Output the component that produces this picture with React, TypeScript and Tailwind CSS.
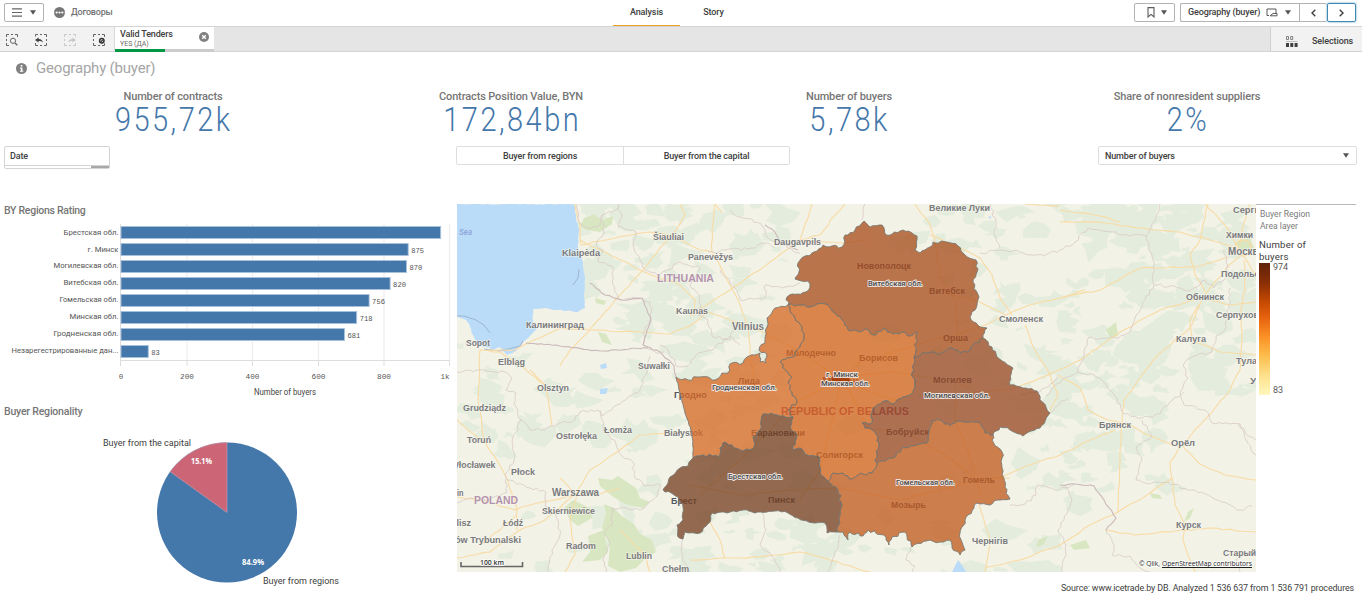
import React from "react";

type Pt = [number, number];

/* ---------- geometry helpers ---------- */

function hash(a: number, b: number) {
  const s = Math.sin(a * 12.9898 + b * 78.233) * 43758.5453;
  return s - Math.floor(s);
}

function pts(s: string): Pt[] {
  return s.trim().split(/\s+/).map((p) => p.split(",").map(Number) as Pt);
}

/** Adds small irregularities between the given vertices of a border. */
function rough(line: Pt[], amp = 1.5, step = 3): Pt[] {
  const out: Pt[] = [line[0]];
  for (let i = 1; i < line.length; i++) {
    const [x0, y0] = line[i - 1];
    const [x1, y1] = line[i];
    const d = Math.hypot(x1 - x0, y1 - y0) || 1;
    const n = Math.max(1, Math.round(d / step));
    for (let k = 1; k < n; k++) {
      const t = k / n;
      const x = x0 + (x1 - x0) * t;
      const y = y0 + (y1 - y0) * t;
      const j = (hash(x, y) - 0.5) * 2 * amp;
      out.push([x - ((y1 - y0) / d) * j, y + ((x1 - x0) / d) * j]);
    }
    out.push([x1, y1]);
  }
  return out;
}

const toPath = (p: Pt[]) => "M" + p.map(([x, y]) => x.toFixed(1) + "," + y.toFixed(1)).join("L");
const rev = (p: Pt[]) => [...p].reverse();
const ring = (...parts: Pt[][]) => toPath(parts.flat()) + "Z";

/* ---------- oblast borders ---------- */

const vitOuter = rough(pts("788,305 787,297 792,294 806,292 810,284 808,281 795,279 799,272 798,263 803,257 812,253 823,245 842,247 845,235 855,230 864,221 870,227 882,225 886,235 903,230 917,236 915,250 920,253 930,247 933,242 947,242 958,246 965,255 976,260 977,272 973,282 979,297 977,305 970,317 980,327 987,328 983,338"));
const vitMog = rough(pts("983,338 973,345 967,352 960,353 952,348 940,354 932,352 923,352 914,357"));
const vitMin = rough(pts("914,357 917,332 910,336 902,332 893,334 883,329 873,335 865,329 860,332 848,330 842,320 835,313 828,305 817,304 807,307 798,305 788,305"));
const groMin = rough(pts("788,305 795,318 802,327 804,337 800,347 793,357 780,362 785,370 792,377 788,383 792,392 797,402 788,410 793,417"));
const groBre = rough(pts("793,417 777,415 763,414 760,430 753,437 755,445 750,450 740,450 732,445 725,442 720,448 719,457 703,455 693,458"));
const groOuter = rough(pts("693,458 693,447 692,433 685,413 680,393 676,377"), 0.4).concat(
  rough(pts("676,377 688,380 697,377 708,377 715,380 722,373 728,373 730,364 743,363 747,357 760,353 760,362 766,363 767,355 759,350 765,340 767,327 767,318 775,308 788,305"))
);
const breMin = rough(pts("793,417 790,427 797,435 793,450 802,449 807,455 818,456 820,473 828,481"));
const breGom = rough(pts("828,481 838,490 842,505 839,520 838,532"));
const breOuter = rough(pts("838,532 827,533 825,523 815,523 798,518 788,513 775,511 755,513 743,510 727,513 712,513 710,522 700,533 685,532 683,539 678,537 677,525 683,520 683,507 678,497 663,490 670,477 680,468 688,466 693,458"), 1.1);
const mogMin = rough(pts("914,357 912,373 915,387 910,395 903,397 893,404 885,401 873,408 872,423 862,423 865,428 875,432 879,443 875,460 877,463"));
const mogGom = rough(pts("877,463 893,458 903,447 917,445 927,443 929,432 932,420 940,420 950,426 960,421 979,422 985,433 993,435"));
const mogOuter = rough(pts("993,435 1000,427 1010,430 1023,436 1040,428 1050,413 1040,400 1037,391 1023,388 1010,385 1013,368 997,357 992,347 983,338"));
const gomMin = rough(pts("877,463 872,473 858,475 852,479 843,473 833,473 828,481"));
const gomOuter = rough(pts("993,435 992,440 1002,452 1002,468 1005,487 1010,499 997,500 990,505 977,503 965,520 960,533 965,550 960,555 952,548 950,540 940,542 930,540 912,547 905,532 892,537 889,545 886,537 868,530 863,536 850,532 848,540 843,532 838,532"));

const oblasts = [
  { name: "Витебская обл.", fill: "#a74c1c", d: ring(vitOuter, vitMog, vitMin) },
  { name: "Гродненская обл.", fill: "#d66823", d: ring(groMin, groBre, groOuter) },
  { name: "Минская обл.", fill: "#d2621b", d: ring(rev(vitMin), mogMin, gomMin, rev(breMin), rev(groMin)) },
  { name: "Могилевская обл.", fill: "#974823", d: ring(vitMog, mogMin, mogGom, mogOuter) },
  { name: "Брестская обл.", fill: "#753e20", d: ring(breMin, breGom, breOuter, rev(groBre)) },
  { name: "Гомельская обл.", fill: "#c15a1d", d: ring(rev(mogGom), gomMin, breGom, rev(gomOuter)) },
];

/* ---------- base map ---------- */

/** Forest clusters: centre x, y, horizontal and vertical spread, number of patches. */
const forestAreas = [
  [640, 235, 60, 35, 34], [690, 330, 60, 60, 34], [730, 230, 60, 30, 20], [560, 400, 90, 40, 26],
  [680, 470, 60, 60, 20], [760, 545, 90, 30, 24], [1050, 250, 70, 50, 22], [1140, 340, 80, 50, 46],
  [1100, 400, 60, 50, 38], [1190, 250, 60, 50, 46], [1120, 470, 60, 40, 18], [1000, 560, 60, 30, 14],
  [940, 225, 50, 25, 10], [640, 300, 60, 40, 18], [500, 400, 45, 60, 14], [1230, 330, 30, 60, 16],
  [600, 550, 100, 35, 16], [840, 560, 70, 18, 12], [1030, 360, 40, 50, 12], [1050, 450, 40, 40, 12],
  [870, 400, 170, 130, 50], [1110, 225, 40, 20, 22], [730, 380, 50, 30, 16],
];

function patch(cx: number, cy: number, r: number, seed: number) {
  const n = 6 + Math.floor(hash(seed, 3) * 5);
  const p: Pt[] = [];
  for (let i = 0; i < n; i++) {
    const a = (i / n) * Math.PI * 2;
    const q = r * (0.25 + hash(seed, i + 7) * 1.15);
    p.push([cx + Math.cos(a) * q * 1.35, cy + Math.sin(a) * q * 0.85]);
  }
  return toPath(p) + "Z";
}

const forests = forestAreas.flatMap(([cx, cy, sx, sy, n], g) =>
  Array.from({ length: n }, (_, i) => {
    const s = g * 100 + i;
    return patch(cx + (hash(s, 1) - 0.5) * 2 * sx, cy + (hash(s, 2) - 0.5) * 2 * sy, 3 + hash(s, 9) * 11, s);
  })
);

const parks = [
  "M598,478L612,480L618,476L636,488L640,498L650,502L643,508L625,504L612,496L600,486Z",
  "M573,500L590,508L592,518L578,526L570,520L564,508Z",
  "M604,504L614,508L622,516L634,524L640,534L652,540L656,552L644,560L636,568L620,572L608,566L610,545L602,528L606,514Z",
  "M588,536L604,530L608,552L600,560L582,562L590,552Z",
  "M594,214L602,220L613,216L612,224L600,232L586,230L580,226L584,218Z",
  "M598,332L606,334L612,345L602,342Z", "M595,298L606,301L604,305L596,303Z",
  "M1106,330L1116,322L1118,336L1110,338Z", "M1188,512L1194,508L1190,518L1184,522Z",
  "M1070,545L1086,540L1090,548L1074,550Z", "M1236,242L1250,238L1254,248L1240,252Z",
  "M1038,540L1048,536L1044,544L1036,548Z", "M1150,493L1160,495L1162,499L1152,498Z",
];

const sea = toPath(rough(pts("457,204 574,204 576,218 579,232 578,248 583,262 585,278 584,295 585,308 578,312 558,310 545,308 533,309 533,325 537,329 530,336 524,341 520,347 514,352 507,355 502,350 500,347 492,349 480,346 474,337 470,327 466,320 457,316"), 0.7)) + "Z";

const provinceLines = [
  "577,204 579,222 588,228 600,225 602,215 612,212 620,205", "602,215 604,232 596,245 603,250 598,262 612,266 613,285 620,300 640,298 650,302 651,318 645,330 643,345 655,352 664,352",
  "618,204 622,216 618,226 636,232 634,248 640,260 645,270 660,275 680,262 700,268", "700,268 690,285 700,298 698,315 708,320 712,336 730,340 735,326 745,322",
  "730,210 740,217 752,219 763,227 768,238 782,245 800,253", "708,252 725,250 748,249 765,243 775,248", "720,270 735,288 740,300 765,298 765,285 785,287 800,283",
  "660,345 668,350 676,366 688,366 696,355 712,350 730,336 740,345", "457,372 480,370 505,372 512,378 506,390 516,393 514,404 521,420 530,430 545,430 560,423 572,422 580,412 598,410 602,416 620,404 640,390 645,376 650,356",
  "521,420 512,442 514,460 505,475 507,492 490,500 470,498 457,503", "507,480 530,488 546,492 545,506 556,514 560,535 552,550 548,572", "600,410 604,430 616,444 622,456 633,462 634,475 644,486 660,484",
  "660,484 658,495 640,510 612,508 612,525 604,533 610,542 603,560 606,572", "683,539 682,560 690,572", "762,513 766,530 760,545 772,556 780,572", "912,545 906,560 915,566 912,572",
  "840,535 835,552 828,572", "980,253 1000,250 1020,252 1030,255 1044,256 1060,250 1075,242 1088,228 1100,230 1112,232 1122,235 1146,236",
  "990,204 996,222 994,234 1000,248", "865,204 862,220", "1160,204 1156,218 1146,236 1153,260 1154,285 1145,300 1135,318 1130,332 1115,338 1088,338 1084,355 1078,372 1062,380 1046,396",
  "1154,285 1170,286 1188,291 1205,280 1214,288 1228,275 1226,262 1224,250", "1230,288 1228,315 1225,330 1216,336 1212,352 1190,358 1183,366 1188,378 1180,392 1184,405 1205,410 1212,423 1240,424 1247,435 1256,440",
  "1078,372 1094,375 1106,384 1115,396 1124,414 1142,418 1160,414 1170,402 1184,392", "1142,420 1152,436 1136,448 1142,460 1136,480 1150,484 1168,482 1188,490 1205,494 1222,502 1240,510 1252,506",
  "1010,505 1025,504 1036,495 1038,485 1055,490 1075,484", "1106,530 1114,545 1112,555 1130,556 1140,568 1150,572", "1065,485 1072,500 1064,520 1058,530 1066,545 1062,572", "1238,423 1246,440 1256,455",
  "1240,572 1236,560 1250,552 1256,550", "1050,413 1060,402 1068,398", "1020,395 1040,392 1058,378",
];

const nationLines = ["590,283 605,295 622,300 642,298 651,320 643,345 660,352 674,366 676,377", "526,343 560,346 600,351 648,348", "765,225 775,232 782,243 798,250", "1060,485 1075,484 1094,486 1104,500 1116,518 1106,530"];

const majorRoads = [
  "488,350 515,350 560,328 590,330 640,332 670,334 690,326 708,312 735,322 748,328", "580,240 605,252 642,271 680,285 695,300 694,316", "642,271 620,295 605,312 590,329",
  "575,204 580,225 581,245 615,238 650,232 672,236 700,250 712,252", "642,271 660,248 676,230 685,215 680,204", "712,252 712,230 715,204 722,212", "712,252 722,270 738,300 748,326 750,355 757,390",
  "690,316 730,290 770,262 800,240 812,204", "800,240 820,235 835,215 845,204", "800,240 840,243 870,240", "748,326 775,338 800,352 840,378 870,392 900,402",
  "545,385 520,365 500,352 480,350 478,400 484,440 505,475 516,505 517,530", "457,420 480,440", "530,370 545,385 550,412 552,426", "590,330 570,350 560,366",
  "457,497 480,500 515,510 530,505 570,496 600,494 620,488", "576,494 590,470 620,450 640,435 683,432 690,432", "577,494 570,520 575,555 565,572", "576,494 545,520 520,530 490,552 457,558", "516,515 500,530 480,545",
  "576,494 560,478", "620,530 645,555 650,572", "710,522 720,540 725,558 690,560", "725,558 760,557 800,552 830,560 870,572", "690,485 740,495 790,490 840,488 900,500 950,488 980,478 1010,478",
  "842,378 860,362 900,350 930,340 955,335 985,325 1012,312 1030,305 1060,298 1100,290 1140,268 1160,268 1200,266 1228,257", "958,338 955,300 940,275 935,240 930,225 915,204", "930,235 960,248 980,258 992,275 1000,298 1012,315",
  "1025,325 1035,350 1050,375 1058,395 1050,410", "945,293 975,300 1005,315", "842,378 830,430 820,470 800,500", "842,378 870,430 905,432 945,455 975,478 982,495", "955,380 955,420 975,470", "840,380 800,400 770,430 740,460 700,495",
  "842,378 890,372 950,380 980,392 1015,388 1040,378 1080,360 1120,332 1160,310 1200,298", "1058,375 1080,388 1088,410 1108,420 1130,425 1150,436 1175,445", "1121,430 1124,400 1135,385 1158,355 1190,328 1200,305", "1000,478 1030,465 1060,455 1090,440 1115,430",
  "1121,430 1120,460 1118,512", "1118,512 1150,493 1172,478 1170,462 1182,445 1200,425 1212,412 1230,390 1240,370 1242,340 1241,310", "1182,445 1200,464 1225,475 1256,480", "1172,478 1175,505 1185,525 1183,540 1190,560 1195,572",
  "1105,530 1135,535 1185,530 1210,528 1256,532", "1118,512 1090,525 1060,545 1020,560 985,568", "979,505 990,540 985,572", "1060,222 1100,222 1140,228 1180,232 1210,240 1240,250", "1060,210 1100,216 1120,222",
  "1208,204 1200,240 1190,255 1195,275 1205,292", "1205,204 1225,225 1240,250 1256,275", "1207,292 1225,270 1240,255", "1207,292 1190,320 1192,340 1220,352 1256,355", "1241,310 1245,290 1244,260", "1200,298 1232,305 1256,302",
  "1250,204 1243,225 1240,245", "1060,298 1085,290", "1025,204 1060,206",
];

interface PlaceLabel { t: string; x: number; y: number; w: number; s?: number; c?: string }

const inner = "#55555c";

const places: PlaceLabel[] = [
  { t: "Klaipėda", x: 562, y: 253, w: 38 }, { t: "Šiauliai", x: 653, y: 237, w: 31 }, { t: "Panevėžys", x: 688, y: 257, w: 45 },
  { t: "Kaunas", x: 676, y: 311, w: 32 }, { t: "Daugavpils", x: 774, y: 241.5, w: 47 }, { t: "Великие Луки", x: 929, y: 208, w: 61 },
  { t: "Vilnius", x: 732, y: 326, w: 32, s: 10 }, { t: "Калининград", x: 526, y: 324.5, w: 58 }, { t: "Sopot", x: 466, y: 342.5, w: 24 },
  { t: "Elbląg", x: 498, y: 362, w: 27 }, { t: "Suwałki", x: 638, y: 366, w: 32 }, { t: "Olsztyn", x: 537, y: 388, w: 32 },
  { t: "Grudziądz", x: 463, y: 408, w: 43 }, { t: "Łomża", x: 604, y: 429.5, w: 28 }, { t: "Ostrołęka", x: 556, y: 435.5, w: 41 },
  { t: "Toruń", x: 467, y: 439.5, w: 24 }, { t: "Włocławek", x: 450.5, y: 464.5, w: 45 }, { t: "Płock", x: 511, y: 471.5, w: 24 },
  { t: "Warszawa", x: 552, y: 492.5, w: 47, s: 10 }, { t: "in", x: 457, y: 492.5, w: 6.5 }, { t: "Skierniewice", x: 542, y: 510.5, w: 53 },
  { t: "Łódź", x: 503, y: 522.5, w: 20 }, { t: "Kalisz", x: 445, y: 523, w: 26 }, { t: "Piotrków Trybunalski", x: 429, y: 539.5, w: 92 },
  { t: "Radom", x: 566, y: 546, w: 30 }, { t: "Lublin", x: 626, y: 556, w: 26 }, { t: "Chełm", x: 662, y: 569, w: 27 },
  { t: "Białystok", x: 664, y: 432.5, w: 39 }, { t: "Брест", x: 671, y: 501, w: 26, c: inner }, { t: "Гродно", x: 674, y: 395, w: 33, c: inner },
  { t: "Молодечно", x: 786, y: 352.5, w: 50, c: inner }, { t: "Борисов", x: 859, y: 357.5, w: 39, c: inner }, { t: "Новополоцк", x: 857, y: 266, w: 54, c: inner },
  { t: "Витебск", x: 929, y: 290.5, w: 36, c: inner }, { t: "Орша", x: 943, y: 338, w: 25, c: inner }, { t: "Могилев", x: 933, y: 380, w: 39, c: inner },
  { t: "Бобруйск", x: 886, y: 432, w: 43, c: inner }, { t: "Лида", x: 738, y: 380.5, w: 22, c: inner }, { t: "Барановичи", x: 751, y: 432.5, w: 54, c: inner },
  { t: "Солигорск", x: 816, y: 455, w: 47, c: inner }, { t: "Пинск", x: 768, y: 500, w: 27, c: inner }, { t: "Мозырь", x: 891, y: 504.5, w: 35, c: inner },
  { t: "Гомель", x: 963, y: 480, w: 32, c: inner }, { t: "Минск", x: 822, y: 381, w: 36, s: 10, c: inner }, { t: "Смоленск", x: 999, y: 319, w: 44 },
  { t: "Чернігів", x: 972, y: 540.5, w: 36 }, { t: "Брянск", x: 1099, y: 425, w: 32 }, { t: "Орёл", x: 1171, y: 443, w: 24 },
  { t: "Курск", x: 1176, y: 524.5, w: 25 }, { t: "Калуга", x: 1176, y: 338.5, w: 30 }, { t: "Обнинск", x: 1186, y: 297, w: 38 },
  { t: "Химки", x: 1226, y: 234.5, w: 27 }, { t: "Москва", x: 1228, y: 251, w: 36, s: 10 }, { t: "Подольск", x: 1221, y: 274, w: 43 },
  { t: "Серпухов", x: 1216, y: 315, w: 43 }, { t: "Сергиев", x: 1233, y: 210, w: 38 }, { t: "Тула", x: 1236, y: 360.5, w: 21 },
  { t: "Узл", x: 1250, y: 380.5, w: 17 }, { t: "Старый", x: 1223, y: 553, w: 33 },
  { t: "LITHUANIA", x: 657, y: 278.5, w: 57, s: 10.8, c: "#b493ad" }, { t: "POLAND", x: 474, y: 500.5, w: 44, s: 10.8, c: "#b493ad" },
  { t: "REPUBLIC OF BELARUS", x: 781, y: 411.5, w: 128, s: 10.8, c: "#a04d6c" },
];

const regionTags: PlaceLabel[] = [
  { t: "Витебская обл.", x: 868, y: 283, w: 55 }, { t: "г. Минск", x: 826, y: 374.5, w: 32 }, { t: "Минская обл.", x: 821, y: 383.5, w: 49 },
  { t: "Гродненская обл.", x: 712, y: 387, w: 65 }, { t: "Могилевская обл.", x: 924, y: 395, w: 66 },
  { t: "Брестская обл.", x: 728, y: 476.5, w: 55 }, { t: "Гомельская обл.", x: 896, y: 482.5, w: 59 },
];

function GeoMap() {
  return (
    <svg className="block h-[368px] w-[799px] shrink-0 overflow-hidden" viewBox="457 204 799 368">
      <rect x="457" y="204" width="799" height="368" fill="#f2f2e6" />
      {forests.map((d, i) => <path key={i} d={d} fill="#e4eddd" />)}
      {parks.map((d) => <path key={d} d={d} fill="#d8e7c1" />)}
      <path d={sea} fill="#badcf9" />
      <path d="M576,268L580,270L578,284L573,285ZM508,345L522,341L519,347L508,351ZM600,365L606,363L607,368L601,369ZM600,389L608,388L606,394L600,394ZM958,560L962,565L966,572L952,572ZM988,217l3,-1v3z" fill="#badcf9" />
      <path d="M457,316L464,316L476,320L484,325L490,333M484,349L500,351L520,346L523,341M579,269L578,278L573,285" stroke="#9db6d4" fill="none" />
      {majorRoads.map((r) => <path key={r} d={toPath(rough(pts(r), 0.7, 7))} stroke="#f9dba5" strokeWidth="1.1" fill="none" strokeLinejoin="round" />)}
      <circle cx="1243" cy="248" r="8" stroke="#f9dba5" strokeWidth="1.3" fill="none" />
      {provinceLines.map((r) => <path key={r} d={toPath(rough(pts(r), 1.5, 3.5))} stroke="#d8cac6" strokeWidth=".8" fill="none" />)}
      {nationLines.map((r) => <path key={r} d={toPath(rough(pts(r), 0.8, 4))} stroke="#cbb9ba" strokeWidth="1.1" fill="none" />)}
      <text x="459" y="235" textLength="13" lengthAdjust="spacingAndGlyphs" fontSize="8.5" fill="#8fa6d8" className="font-['Liberation_Sans'] font-bold italic">Sea</text>
      {places.map((p) => (
        <text key={p.t} x={p.x} y={p.y + (p.s ?? 9) * 0.36} textLength={p.w} lengthAdjust="spacingAndGlyphs" fontSize={p.s ?? 9} fill={p.c ?? "#7a7a7e"} stroke="#f8f8f0" strokeOpacity=".7" strokeWidth="1.3" strokeLinejoin="round" className="font-['Liberation_Sans'] font-bold [paint-order:stroke]">
          {p.t}
        </text>
      ))}
      {oblasts.map((o) => (
        <path key={o.name} d={o.d} fill={o.fill} fillOpacity=".76" stroke="#7b7872" strokeWidth=".9" strokeLinejoin="round" />
      ))}
      <path d="M831,377L837,375L843,376L849,377L850,382L845,386L837,386L832,382Z" fill="#a23a05" fillOpacity=".85" />
      {regionTags.map((p) => (
        <text key={p.t} x={p.x} y={p.y + 2.6} textLength={p.w} lengthAdjust="spacingAndGlyphs" fontSize="8" fill="#4a4a4a" stroke="#f4f0ee" strokeOpacity=".9" strokeWidth="1.8" strokeLinejoin="round" className="font-['Roboto'] font-medium [paint-order:stroke]">
          {p.t}
        </text>
      ))}
      <path d="M461,562V566.5H522.5V562" stroke="#666" strokeWidth="1.6" fill="none" />
      <text x="480" y="564.5" textLength="24" lengthAdjust="spacingAndGlyphs" fontSize="7.2" fill="#333" stroke="#fff" strokeWidth="1.5" className="font-['Open_Sans'] font-semibold [paint-order:stroke]">100 km</text>
      <text x="1139" y="566" textLength="21" lengthAdjust="spacingAndGlyphs" fontSize="7.2" fill="#222" stroke="#fff" strokeWidth="1.5" className="font-['Open_Sans'] font-medium [paint-order:stroke]">© Qlik,</text>
      <text x="1162" y="566" textLength="90" lengthAdjust="spacingAndGlyphs" fontSize="7.2" fill="#222" stroke="#fff" strokeWidth="1.5" className="font-['Open_Sans'] font-medium [paint-order:stroke]">OpenStreetMap contributors</text>
      <path d="M1162,567.5H1252" stroke="#222" strokeWidth="1" />
    </svg>
  );
}

/* ---------- charts ---------- */

const bars = [
  { name: "Брестская обл.", v: 974, w: 55 }, { name: "г. Минск", v: 875, w: 31 }, { name: "Могилевская обл.", v: 870, w: 65 },
  { name: "Витебская обл.", v: 820, w: 55 }, { name: "Гомельская обл.", v: 756, w: 59 }, { name: "Минская обл.", v: 718, w: 49 },
  { name: "Гродненская обл.", v: 681, w: 65 }, { name: "Незарегестрированные дан...", v: 83, w: 107 },
];

function BarChart() {
  return (
    <svg className="block h-[182px] w-[452px]" viewBox="0 220 452 182">
      {[187, 252.5, 318.5, 384, 449.5].map((x) => <path key={x} d={`M${x},224V360`} stroke="#eeeeee" strokeWidth="1.3" />)}
      <path d="M120.5,224V366" stroke="#ddd" />
      <path d="M120,360.5H450M187,360V366M252.5,360V366M318.5,360V366M384,360V366M449.5,360V366" stroke="#ddd" fill="none" />
      {bars.map((b, i) => {
        const y = 226.5 + i * 17;
        const end = 121 + b.v * 0.3282;
        return (
          <g key={b.name}>
            <rect x="121" y={y} width={end - 121} height="12" fill="#4477aa" stroke="#a9c2dc" strokeWidth=".9" />
            <text x={118.5 - b.w} y={y + 8.2 - i * 0.12} textLength={b.w} lengthAdjust="spacingAndGlyphs" fontSize="7.8" fill="#555" className="font-['Roboto']">{b.name}</text>
            {i > 0 && (
              <text x={end + 3} y={y + 9.3} textLength={String(b.v).length * 4.3} lengthAdjust="spacingAndGlyphs" fontSize="7.2" fill="#555" className="font-['Liberation_Mono']">{b.v}</text>
            )}
          </g>
        );
      })}
      {[["0", 121, 4.5], ["200", 187, 14], ["400", 252.5, 14], ["600", 318.5, 14], ["800", 384, 14], ["1k", 445, 9]].map(([t, x, w]) => (
        <text key={t} x={Number(x) - Number(w) / 2} y="379.3" textLength={w} lengthAdjust="spacingAndGlyphs" fontSize="7.8" fill="#595959" className="font-['Liberation_Mono']">{t}</text>
      ))}
      <text x="254" y="395.3" textLength="62" lengthAdjust="spacingAndGlyphs" fontSize="8.2" fill="#444" className="font-['Roboto']">Number of buyers</text>
    </svg>
  );
}

function PieChart() {
  return (
    <svg className="block h-[170px] w-[452px]" viewBox="0 424 452 170">
      <circle cx="227" cy="512.5" r="70" fill="#4477aa" />
      <path d="M227,512.5L170.1,471.7A70,70 0 0 1 227,442.5Z" fill="#cc6677" stroke="#c6a4b5" strokeWidth=".6" />
      <text x="103" y="446" textLength="88" lengthAdjust="spacingAndGlyphs" fontSize="9" fill="#404040" className="font-['Roboto']">Buyer from the capital</text>
      <text x="263" y="584" textLength="76" lengthAdjust="spacingAndGlyphs" fontSize="9" fill="#404040" className="font-['Roboto']">Buyer from regions</text>
      <text x="191" y="464" textLength="21" lengthAdjust="spacingAndGlyphs" fontSize="8.2" fill="#fff" className="font-['Open_Sans'] font-bold">15.1%</text>
      <text x="242" y="565" textLength="22" lengthAdjust="spacingAndGlyphs" fontSize="8.2" fill="#fff" className="font-['Open_Sans'] font-bold">84.9%</text>
    </svg>
  );
}

/* ---------- small pieces ---------- */

function Caret() {
  return <svg className="h-[5px] w-[6px] shrink-0" viewBox="0 0 6 5"><path d="M0,.3H6L3,4.8Z" fill="#555" /></svg>;
}

function SelectionTool({ children, muted }: { children: React.ReactNode; muted?: boolean }) {
  return (
    <svg className="h-3 w-3" viewBox="0 0 12 12" fill="none" stroke={muted ? "#c8c8c8" : "#666"}>
      <path d="M.5,3V.5H3M5,.5H7M9,.5H11.5V3M11.5,9V11.5H9M7,11.5H5M3,11.5H.5V9M.5,5V7M11.5,5V7" strokeWidth="1" />
      {children}
    </svg>
  );
}

function Kpi({ label, value }: { label: string; value: string }) {
  return (
    <div className="flex w-[338px] flex-col items-center whitespace-nowrap">
      <div className="h-[13px] text-[11px] leading-[13px] font-medium tracking-[-0.13px] text-[#767676]">{label}</div>
      <div className="mt-px h-[32px] origin-center scale-x-[0.88] pl-[2px] text-[33px] leading-[31px] font-light tracking-[2.8px] text-[#4477aa]">{value}</div>
    </div>
  );
}

export default function App() {
  return (
    <div className="flex h-[606px] w-[1362px] flex-col overflow-hidden bg-white font-['Roboto','Liberation_Sans',sans-serif] text-[#595959]">
      <header className="flex h-[27px] shrink-0 border-b border-[#d4d4d4]">
        <div className="flex w-[613px] items-start pt-[3px] pl-1">
          <button className="flex h-[19px] w-10 items-center justify-center gap-[8px] rounded-[2px] border border-[#b3b3b3]">
            <svg className="h-[9px] w-[10px]" viewBox="0 0 10 9"><path d="M0,.8H10M0,4.5H10M0,8.2H10" stroke="#666" strokeWidth="1.2" /></svg>
            <Caret />
          </button>
          <svg className="mt-[4px] ml-[10px] h-[11px] w-[11px]" viewBox="0 0 11 11">
            <circle cx="5.5" cy="5.5" r="5.5" fill="#777" />
            <path d="M0,5.5H11" stroke="#aaa" strokeWidth=".6" />
            <circle cx="2.7" cy="5.5" r="1" fill="#fff" /><circle cx="5.5" cy="5.5" r="1" fill="#fff" /><circle cx="8.3" cy="5.5" r="1" fill="#fff" />
          </svg>
          <span className="ml-[6px] pt-[3px] text-[9px] leading-[13px] font-medium tracking-[-0.2px] text-[#737373]">Договоры</span>
        </div>
        <nav className="flex text-[9px] leading-[13px] font-medium tracking-[-0.1px] text-[#404040]">
          <div className="h-[26px] w-[67px] border-b border-[#e8a020] pt-[6px] text-center">Analysis</div>
          <div className="h-[26px] w-[67px] pt-[6px] text-center">Story</div>
        </nav>
        <div className="mt-[3px] ml-auto flex h-[19px] items-stretch pr-[6px]">
          <button className="flex w-[41px] items-center justify-center gap-[6px] rounded-[2px] border border-[#b3b3b3] pl-[4px]">
            <svg className="h-[11px] w-2" viewBox="0 0 8 11"><path d="M1,.6H7V10L4,7.4L1,10Z" fill="none" stroke="#595959" strokeWidth="1.1" /></svg>
            <Caret />
          </button>
          <div className="ml-[5px] flex rounded-[2px] border border-r-0 border-[#b3b3b3]">
            <button className="flex w-[118px] items-center pl-[7px] text-[9px] font-medium tracking-[-0.13px] text-[#404040]">
              <span className="w-[72px] pt-px text-left whitespace-nowrap">Geography (buyer)</span>
              <svg className="ml-[6px] h-[9px] w-3" viewBox="0 0 12 9"><path d="M3,7.5H1V1H10V5M4,7.8L7,5.5H11V7.8Z" fill="none" stroke="#595959" /></svg>
              <span className="ml-[7px] flex"><Caret /></span>
            </button>
            <button className="flex w-[28px] items-center justify-center border-l border-[#b3b3b3]">
              <svg className="h-2 w-[5px]" viewBox="0 0 5 8"><path d="M4.3,.8L1,4L4.3,7.2" fill="none" stroke="#404040" strokeWidth="1.4" /></svg>
            </button>
          </div>
          <button className="flex w-[29px] items-center justify-center rounded-[2px] border border-[#3f8ab3] shadow-[0_0_2px_#3f8ab3]">
            <svg className="h-2 w-[5px]" viewBox="0 0 5 8"><path d="M.7,.8L4,4L.7,7.2" fill="none" stroke="#404040" strokeWidth="1.4" /></svg>
          </button>
        </div>
      </header>

      <section className="flex h-[25px] shrink-0 border-b border-[#d4d4d4] bg-[#e5e5e5]">
        <div className="flex w-[115px] items-center gap-[17px] border-r border-[#d9d9d9] bg-[#f2f2f2] pt-px pl-[6px]">
          <SelectionTool><rect x="3" y="3" width="9" height="9" fill="#f2f2f2" stroke="none" /><circle cx="7" cy="6.8" r="2.6" /><path d="M9,9L11.3,11.3" strokeWidth="1.4" /></SelectionTool>
          <SelectionTool><rect x="0" y="2.5" width="8" height="5" fill="#f2f2f2" stroke="none" /><path d="M0,6L3.6,3.4V5C6.2,5 7.6,6.2 7.8,8.6C6.8,7.4 5.6,7 3.6,7V8.6Z" fill="#404040" stroke="none" /></SelectionTool>
          <SelectionTool muted><rect x="4" y="2.5" width="8" height="5" fill="#f2f2f2" stroke="none" /><path d="M12,6L8.4,3.4V5C5.8,5 4.4,6.2 4.2,8.6C5.2,7.4 6.4,7 8.4,7V8.6Z" fill="#c8c8c8" stroke="none" /></SelectionTool>
          <SelectionTool><circle cx="8.6" cy="6.8" r="3.8" fill="#f2f2f2" stroke="none" /><circle cx="8.8" cy="6.8" r="2.2" stroke="#333" strokeWidth="1.5" /><path d="M7.6,8L10,5.6" stroke="#333" strokeWidth="1.1" /></SelectionTool>
        </div>
        <div className="flex w-[99px] flex-col justify-between bg-white">
          <div className="flex justify-between pt-[2px] pr-[5px] pl-[5px]">
            <div className="whitespace-nowrap">
              <div className="text-[9px] leading-[10px] font-medium tracking-[-0.15px] text-[#404040]">Valid Tenders</div>
              <div className="pt-px text-[7px] leading-[9px] text-[#6a6a6a]">YES (ДА)</div>
            </div>
            <svg className="mt-[3px] h-[10px] w-[10px]" viewBox="0 0 10 10"><circle cx="5" cy="5" r="5" fill="#808080" /><path d="M3.2,3.2L6.8,6.8M6.8,3.2L3.2,6.8" stroke="#fff" strokeWidth="1.3" /></svg>
          </div>
          <div className="flex h-[3px] bg-[#cccccc]"><div className="h-[3px] w-[50px] bg-[#009845]" /></div>
        </div>
        <div className="ml-auto flex w-[92px] items-center border-l border-[#d0d0d0] bg-[#f2f2f2] pt-[4px] pl-[15px]">
          <svg className="h-[11px] w-3" viewBox="0 0 12 11"><path d="M.5,.5H2.5V3.5H.5ZM4.7,.5H6.7V3.5H4.7Z" fill="none" stroke="#777" strokeWidth=".9" /><path d="M0,5.5H11.5" stroke="#aaa" strokeWidth=".7" /><path d="M0,7H3V11H0ZM4.3,7H7.3V11H4.3ZM8.6,7H11.6V11H8.6Z" fill="#404040" /></svg>
          <span className="ml-[14px] pt-px text-[9px] font-medium tracking-[-0.1px] text-[#404040]">Selections</span>
        </div>
      </section>

      <div className="flex h-[38px] shrink-0 items-start pt-[7px] pl-4">
        <svg className="mt-[4px] h-[11px] w-[11px]" viewBox="0 0 11 11"><circle cx="5.5" cy="5.5" r="5.5" fill="#808080" /><path d="M4.7,2H6.4V3.4H4.7ZM3.9,4.4H6.4V7.8H7.3V8.8H3.9V7.8H4.8V5.4H3.9Z" fill="#fff" /></svg>
        <h1 className="ml-[9px] text-[15px] leading-[18px] font-normal tracking-[-0.2px] text-[#a6a6a6]">Geography (buyer)</h1>
      </div>

      <div className="ml-1 flex h-[56px] shrink-0">
        <Kpi label="Number of contracts" value="955,72k" />
        <Kpi label="Contracts Position Value, BYN" value="172,84bn" />
        <Kpi label="Number of buyers" value="5,78k" />
        <Kpi label="Share of nonresident suppliers" value="2%" />
      </div>

      <div className="flex h-[58px] shrink-0 items-start text-[9px] font-medium tracking-[-0.14px] text-[#404040]">
        <div className="ml-1 flex h-[23px] w-[106px] flex-col justify-between rounded-[2px] border border-[#d4d4d4]">
          <div className="pt-[3px] pl-[5px] leading-[13px]">Date</div>
          <div className="flex h-[3px] justify-end border-t border-[#d4d4d4]"><div className="h-[2px] w-[18px] bg-[#a8a8a8]" /></div>
        </div>
        <div className="ml-[346px] flex h-[19px] w-[334px] rounded-[2px] border border-[#dedede] leading-[18px]">
          <div className="w-[167px] border-r border-[#dedede] text-center">Buyer from regions</div>
          <div className="w-[165px] text-center">Buyer from the capital</div>
        </div>
        <div className="ml-[308px] flex h-[19px] w-[259px] items-center justify-between rounded-[2px] border border-[#dedede] pr-[7px] pl-[6px]">
          <span className="pt-[2px]">Number of buyers</span>
          <Caret />
        </div>
      </div>

      <main className="flex h-[402px] shrink-0">
        <div className="flex w-[457px] flex-col">
          <h2 className="h-4 pl-1 text-[10.5px] leading-[14px] font-medium tracking-[-0.28px] text-[#767676]">BY Regions Rating</h2>
          <BarChart />
          <h2 className="mt-[3px] h-[19px] pl-1 text-[10.5px] leading-[14px] font-medium tracking-[-0.2px] text-[#767676]">Buyer Regionality</h2>
          <PieChart />
        </div>
        <div className="flex flex-col">
          <div className="flex w-[899px]">
            <GeoMap />
            <aside className="flex w-[100px] flex-col border-t border-[#b8b8b8] pt-[3px] pl-[3px]">
              <div className="pl-px text-[8.6px] leading-[12px] text-[#7b7b7b]">Buyer Region<br />Area layer</div>
              <div className="mt-[7px] text-[9.6px] leading-[12px] tracking-[0.18px] text-[#404040]">Number of<br />buyers</div>
              <div className="flex">
                <div className="h-[132px] w-[11px] bg-[linear-gradient(180deg,#5f2309_0%,#8a2f06_15%,#c34802_29%,#e8640f_42%,#fb9227_56%,#fdbc4b_70%,#fde08a_85%,#fff7bc_100%)]" />
                <div className="flex h-[132px] flex-col justify-between pl-[3px] text-[9px] leading-[9px] text-[#595959]"><span>974</span><span>83</span></div>
              </div>
            </aside>
          </div>
          <div className="mt-[10px] w-[897px] text-right text-[8.9px] leading-[13px] tracking-[-0.12px] text-[#404040]">Source: www.icetrade.by DB. Analyzed 1 536 637 from 1 536 791 procedures</div>
        </div>
      </main>
    </div>
  );
}
